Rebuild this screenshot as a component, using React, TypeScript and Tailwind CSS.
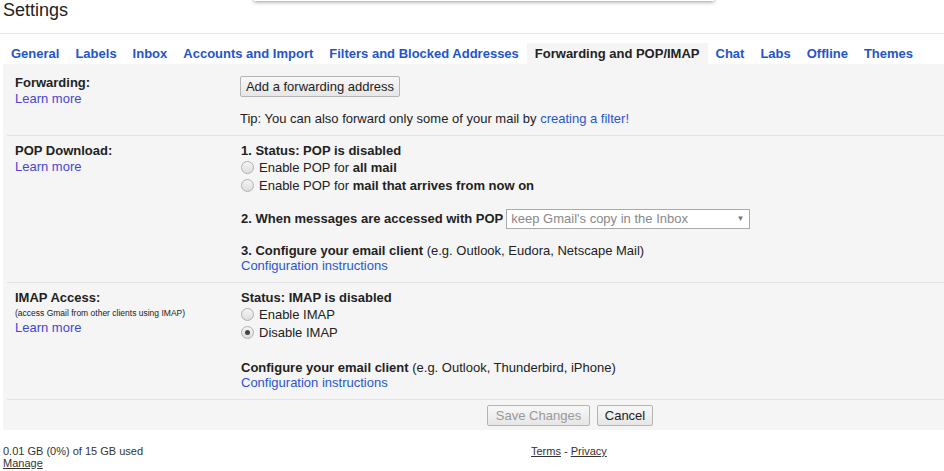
import React from "react";

const tabs = [
  "General",
  "Labels",
  "Inbox",
  "Accounts and Import",
  "Filters and Blocked Addresses",
  "Forwarding and POP/IMAP",
  "Chat",
  "Labs",
  "Offline",
  "Themes",
];

function Radio({ checked, children }: { checked?: boolean; children: React.ReactNode }) {
  return (
    <div className="flex h-[18px] items-center">
      <span className="flex h-[13px] w-[13px] items-center justify-center rounded-full border border-[#b0b0b0] bg-gradient-to-b from-[#f4f4f4] to-[#dedede]">
        {checked && <span className="h-[5px] w-[5px] rounded-full bg-[#444]" />}
      </span>
      <span className="ml-[5px] leading-[15px]">{children}</span>
    </div>
  );
}

function Divider() {
  return <div className="ml-[4px] h-px bg-[#e3e3e3]" />;
}

function Button({ children, disabled, width }: { children: React.ReactNode; disabled?: boolean; width: string }) {
  return (
    <button
      className={
        "h-[21px] rounded-[2px] border border-[#b4b4b4] bg-gradient-to-b from-[#f8f8f8] to-[#e6e6e6] text-[13px] leading-[19px] " +
        width +
        (disabled ? " text-[#999]" : " text-[#222]")
      }
    >
      {children}
    </button>
  );
}

export default function App() {
  return (
    <div className="relative min-h-[471px] overflow-hidden bg-white font-['Liberation_Sans',Arial,sans-serif] text-[13px] text-[#222]">
      {/* edge of a menu hanging over the page */}
      <div className="absolute left-[254px] top-[-20px] h-[21px] w-[460px] bg-white shadow-[0_1px_4px_rgba(0,0,0,0.4)]" />

      <h1 className="pl-[3px] text-[18px] leading-[21px]">Settings</h1>
      <div className="mt-[12px] h-px bg-[#e5e5e5]" />

      <div className="mt-[9px] flex pl-[3px]">
        {tabs.map((t) => (
          <div
            key={t}
            className={
              t === "Forwarding and POP/IMAP"
                ? "h-[21px] bg-[#f5f5f5] px-2 text-[13px] font-bold leading-[21px] text-[#222]"
                : "h-[21px] px-2 text-[13px] font-bold leading-[21px] text-[#2255cc]"
            }
          >
            {t}
          </div>
        ))}
      </div>

      <div className="ml-[3px] bg-[#f5f5f5]">
        {/* Forwarding */}
        <div className="flex pb-[9px] pt-[11px]">
          <div className="w-[237px] pl-[12px]">
            <div className="font-bold leading-[16px]">Forwarding:</div>
            <div className="leading-[16px] text-[#4646d2]">Learn more</div>
          </div>
          <div className="pt-px">
            <Button width="w-[160px]">Add a forwarding address</Button>
            <div className="mt-[14px] leading-[15px]">
              Tip: You can also forward only some of your mail by{" "}
              <span className="text-[#2a55d0]">creating a filter!</span>
            </div>
          </div>
        </div>
        <Divider />

        {/* POP */}
        <div className="flex pb-[9px] pt-[7px]">
          <div className="w-[237px] pl-[12px]">
            <div className="font-bold leading-[16px]">POP Download:</div>
            <div className="leading-[16px] text-[#4646d2]">Learn more</div>
          </div>
          <div className="pl-px">
            <div className="font-bold leading-[15px]">1. Status: POP is disabled</div>
            <Radio>
              Enable POP for <b>all mail</b>
            </Radio>
            <Radio>
              Enable POP for <b>mail that arrives from now on</b>
            </Radio>
            <div className="mt-[15px] flex h-[20px] items-center">
              <span className="font-bold">2. When messages are accessed with POP</span>
              <div className="ml-[3px] flex h-[20px] w-[244px] items-center justify-between border border-[#aaa] bg-white pl-[4px] pr-[5px] text-[#888]">
                <span>keep Gmail's copy in the Inbox</span>
                <span className="text-[8px] text-[#777]">▼</span>
              </div>
            </div>
            <div className="mt-[14px] leading-[15px]">
              <b>3. Configure your email client</b> (e.g. Outlook, Eudora, Netscape Mail)
            </div>
            <div className="leading-[15px] text-[#2a55d0]">Configuration instructions</div>
          </div>
        </div>
        <Divider />

        {/* IMAP */}
        <div className="flex pb-[9px] pt-[7px]">
          <div className="w-[237px] pl-[12px]">
            <div className="font-bold leading-[16px]">IMAP Access:</div>
            <div className="text-[8.5px] leading-[14px]">(access Gmail from other clients using IMAP)</div>
            <div className="leading-[16px] text-[#4646d2]">Learn more</div>
          </div>
          <div className="pl-px">
            <div className="font-bold leading-[15px]">Status: IMAP is disabled</div>
            <Radio>Enable IMAP</Radio>
            <Radio checked>Disable IMAP</Radio>
            <div className="mt-[19px] leading-[15px]">
              <b>Configure your email client</b> (e.g. Outlook, Thunderbird, iPhone)
            </div>
            <div className="leading-[15px] text-[#2a55d0]">Configuration instructions</div>
          </div>
        </div>
        <Divider />

        <div className="flex gap-[7px] pb-[4px] pl-[484px] pt-[5px]">
          <Button disabled width="w-[103px]">
            Save Changes
          </Button>
          <Button width="w-[56px]">Cancel</Button>
        </div>
      </div>

      <div className="mt-[15px] flex text-[11px] leading-[12px] text-[#333]">
        <div className="w-[531px] pl-[3px]">
          <div>0.01 GB (0%) of 15 GB used</div>
          <div className="underline">Manage</div>
        </div>
        <div>
          <span className="underline">Terms</span> - <span className="underline">Privacy</span>
        </div>
      </div>
    </div>
  );
}
